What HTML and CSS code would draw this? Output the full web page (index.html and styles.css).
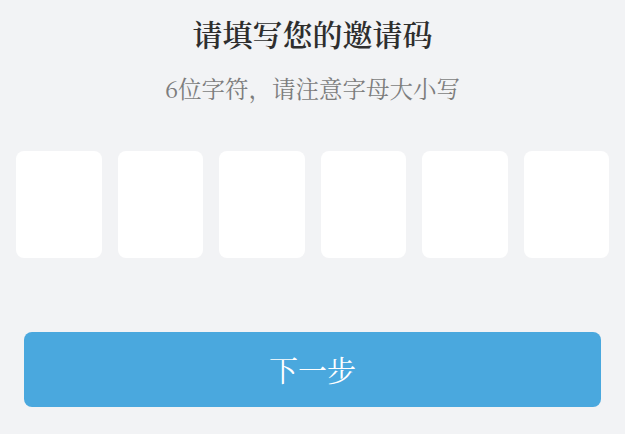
FILE: index.html
```html
<!DOCTYPE html>
<html lang="zh-CN">
<head>
<meta charset="utf-8">
<link rel="stylesheet" href="styles.css">
</head>
<body>
<div class="page">
  <h1 class="title">请填写您的邀请码</h1>
  <p class="subtitle">6位字符，请注意字母大小写</p>
  <div class="codes">
    <div class="code"></div>
    <div class="code"></div>
    <div class="code"></div>
    <div class="code"></div>
    <div class="code"></div>
    <div class="code"></div>
  </div>
  <div class="actions">
    <button class="next">下一步</button>
  </div>
</div>
</body>
</html>
```
FILE: styles.css
```css
html, body {
  margin: 0;
  padding: 0;
  background: #f2f3f5;
}
.page {
  width: 625px;
  height: 434px;
  font-family: "Noto Serif CJK SC", "Liberation Serif", "Noto Sans CJK SC", serif;
  display: flex;
  flex-direction: column;
}
.title {
  margin: 13px 0 0;
  text-align: center;
  font-size: 30px;
  line-height: 40px;
  font-weight: 600;
  color: #2e2e2e;
}
.subtitle {
  margin: 20px 0 0;
  text-align: center;
  font-size: 23.5px;
  line-height: 30px;
  color: #7d7d7d;
}
.codes {
  margin-top: 48px;
  padding: 0 16px;
  display: grid;
  grid-template-columns: repeat(6, 1fr);
  gap: 16px;
}
.code {
  height: 107px;
  background: #ffffff;
  border-radius: 8px;
}
.actions {
  margin-top: 74px;
  padding: 0 24px;
}
.next {
  width: 100%;
  height: 75px;
  border: none;
  border-radius: 8px;
  background: #4aa8de;
  color: #ffffff;
  font-family: inherit;
  font-size: 29px;
  display: block;
}
```
